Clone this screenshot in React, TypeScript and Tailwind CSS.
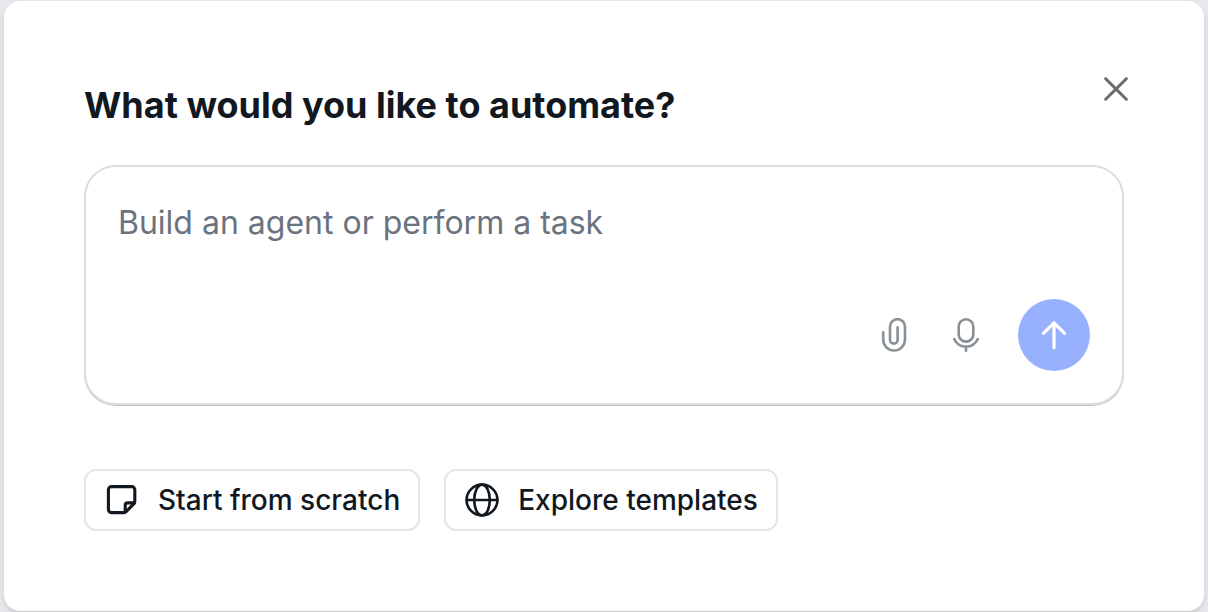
import React, { useState } from 'react';

interface IconProps {
  className?: string;
}

interface ChipProps {
  icon: React.ReactNode;
  label: string;
}

const strokeProps = {
  fill: 'none',
  stroke: 'currentColor',
  strokeLinecap: 'round',
  strokeLinejoin: 'round',
  'aria-hidden': true,
} as const;

const CloseIcon: React.FC<IconProps> = ({ className }) => (
  <svg viewBox="0 0 24 24" strokeWidth="3" className={className} {...strokeProps}>
    <path d="M1.7 1.7l20.6 20.6M22.3 1.7L1.7 22.3" />
  </svg>
);

const PaperclipIcon: React.FC<IconProps> = ({ className }) => (
  <svg viewBox="0 0 36 36" strokeWidth="2.6" className={className} {...strokeProps}>
    <path d="M7.2 15.2v7.4a10.9 10.9 0 0 0 21.8 0V9.6a7.5 7.5 0 0 0-15 0v13.2a3.8 3.8 0 0 0 7.6 0V10.4" />
  </svg>
);

const MicIcon: React.FC<IconProps> = ({ className }) => (
  <svg viewBox="0 0 36 36" strokeWidth="2.6" className={className} {...strokeProps}>
    <rect x="10.7" y="2.2" width="14.6" height="22.4" rx="7.3" />
    <path d="M6.2 22.2c2.4 4.6 6.8 7.6 11.8 7.6s9.4-3 11.8-7.6" />
    <path d="M18 29.8v4" />
  </svg>
);

const ArrowUpIcon: React.FC<IconProps> = ({ className }) => (
  <svg viewBox="0 0 36 36" strokeWidth="3.2" className={className} {...strokeProps}>
    <path d="M18 30.8V5.8M7.4 16.4L18 5.8l10.6 10.6" />
  </svg>
);

const NoteIcon: React.FC<IconProps> = ({ className }) => (
  <svg viewBox="0 0 36 36" strokeWidth="3.1" className={className} {...strokeProps}>
    <path d="M19.8 30.6H7.4a3 3 0 0 1-3-3V7.600a3 3 0 0 1 3-3h20.400a3 3 0 0 1 3 3v12c0 .9-.3 1.700-1 2.300l-7.700 7.700c-.6.600-1.400 1-2.300 1z" />
    <path d="M21.200 29.800v-6.400a2.500 2.500 0 0 1 2.500-2.500h6.400" />
  </svg>
);

const GlobeIcon: React.FC<IconProps> = ({ className }) => (
  <svg viewBox="0 0 36 36" strokeWidth="2.6" className={className} {...strokeProps}>
    <circle cx="18" cy="18" r="15.4" />
    <ellipse cx="18" cy="18" rx="7.8" ry="15.4" />
    <path d="M2.6 18h30.8" />
  </svg>
);

const Chip: React.FC<ChipProps> = ({ icon, label }) => (
  <button
    type="button"
    className="flex items-center gap-4.5 rounded-xl border-2 border-[#e3e7ea] bg-white px-4.5 py-2 text-[28px] leading-[42px] font-medium text-[#11181f]"
  >
    {icon}
    {label}
  </button>
);

const App: React.FC = () => {
  const [prompt, setPrompt] = useState('');

  return (
    <div className="flex min-h-screen bg-[#e6e7ea] px-1 py-px font-['Inter',sans-serif]">
      <main className="flex-1 rounded-2xl bg-white px-20 pt-21 pb-20 shadow-md">
        <header className="flex items-start justify-between">
          <h1 className="text-4xl font-bold text-[#11181f]">What would you like to automate?</h1>
          <button
            type="button"
            aria-label="Close"
            className="-mt-3 -mr-2 flex size-8 items-center justify-center text-[#6b6b6b]"
          >
            <CloseIcon className="size-6" />
          </button>
        </header>

        <form
          onSubmit={(e) => e.preventDefault()}
          className="mt-10 rounded-[32px] border-2 border-[#dedede] bg-white px-8 pt-9 pb-8 shadow-[0_1px_0_#c4c4c4]"
        >
          <textarea
            aria-label="Prompt"
            placeholder="Build an agent or perform a task"
            value={prompt}
            onChange={(e) => setPrompt(e.target.value)}
            className="block h-24 w-full resize-none text-[32px] leading-10 text-[#11181f] outline-none placeholder:text-[#6b7280]"
          />
          <div className="flex items-center justify-end text-[#8a9196]">
            <button type="button" aria-label="Attach file" className="flex size-18 items-center justify-center">
              <PaperclipIcon className="size-9" />
            </button>
            <button type="button" aria-label="Record voice" className="flex size-18 items-center justify-center">
              <MicIcon className="size-9" />
            </button>
            <button
              type="submit"
              aria-label="Send"
              className="ml-4 flex size-18 items-center justify-center rounded-full bg-[#97b1ff] text-white"
            >
              <ArrowUpIcon className="size-9" />
            </button>
          </div>
        </form>

        <div className="mt-16 flex flex-wrap gap-6">
          <Chip icon={<NoteIcon className="size-9" />} label="Start from scratch" />
          <Chip icon={<GlobeIcon className="size-9" />} label="Explore templates" />
        </div>
      </main>
    </div>
  );
};

export default App;
